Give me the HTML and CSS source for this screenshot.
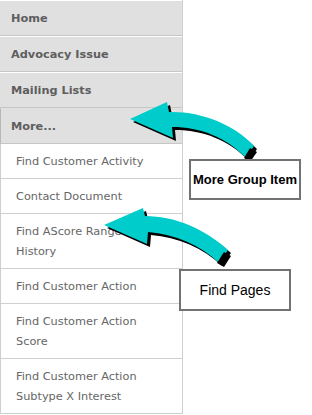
FILE: index.html
```html
<!DOCTYPE html>
<html lang="en">
<head>
    <meta charset="UTF-8">
    <meta name="viewport" content="width=device-width, initial-scale=1.0">
    <title>Menu Groups</title>
    <link rel="stylesheet" href="styles.css">
</head>
<body>

    <div class="screen">
        <ul class="menu">
            <li class="group">Home</li>
            <li class="group">Advocacy Issue</li>
            <li class="group">Mailing Lists</li>
            <li class="group open">More...</li>
            <li class="page">Find Customer Activity</li>
            <li class="page">Contact Document</li>
            <li class="page">Find AScore Range History</li>
            <li class="page">Find Customer Action</li>
            <li class="page">Find Customer Action Score</li>
            <li class="page">Find Customer Action Subtype X Interest</li>
        </ul>

        <!-- callout arrows -->
        <svg class="arrows" width="312" height="415" viewBox="0 0 312 415">
            <g transform="translate(3,3)" fill="#000">
                <path d="M130 119 L167 102 L169 112 C200 111 234 124 254 146 L246 158 C226 137 200 127 172 127 L173 138 Z"/>
                <path d="M104 225 L143 208 L145 216 C176 216 206 230 228 250 L219 263 C200 245 175 234 148 232 L147 244 Z"/>
            </g>
            <g fill="#00cccc">
                <path d="M130 119 L167 102 L169 112 C200 111 234 124 254 146 L246 158 C226 137 200 127 172 127 L173 138 Z"/>
                <path d="M104 225 L143 208 L145 216 C176 216 206 230 228 250 L219 263 C200 245 175 234 148 232 L147 244 Z"/>
            </g>
            <path d="M250 148 L257 152 L250 162 L244 158 Z" fill="#000"/>
            <path d="M224 252 L231 256 L224 267 L217 263 Z" fill="#000"/>
        </svg>

        <div class="label label-group">More Group Item</div>
        <div class="label label-pages">Find Pages</div>
    </div>

</body>
</html>
```

FILE: styles.css
```css
body {
    margin: 0;
    background: white;
    font-family: "DejaVu Sans", Verdana, sans-serif;
}

.screen {
    position: relative;
    width: 312px;
    height: 415px;
    overflow: hidden;
}

.menu {
    list-style: none;
    margin: 0;
    padding: 0;
    width: 182px;
    border-right: 1px solid #cfcfcf;
}

.menu li {
    font-size: 11.3px;
    line-height: 20px;
}

.group {
    background: #e0e0e0;
    color: #5e5e5e;
    font-weight: bold;
    padding: 8px 11px 6px;
    border-top: 1px solid white;
    border-bottom: 1px solid #c6c6c6;
}

.group.open {
    border-top-color: #e0e0e0;
    border-left: 1px solid #b8b8b8;
    padding-left: 10px;
}

.page {
    color: #666;
    padding: 8px 30px 6px 15px;
    border-left: 1px solid #cfcfcf;
    border-bottom: 1px solid #cfcfcf;
}

.arrows {
    position: absolute;
    left: 0;
    top: 0;
}

.label {
    position: absolute;
    background: white;
    border: 2px solid #727272;
    color: black;
    font-family: "Liberation Sans", Arial, sans-serif;
    text-align: center;
    box-sizing: border-box;
}

.label-group {
    left: 189px;
    top: 159px;
    width: 112px;
    height: 41px;
    line-height: 37px;
    font-size: 13px;
    font-weight: bold;
}

.label-pages {
    left: 179px;
    top: 269px;
    width: 112px;
    height: 42px;
    line-height: 38px;
    font-size: 14px;
}
```
